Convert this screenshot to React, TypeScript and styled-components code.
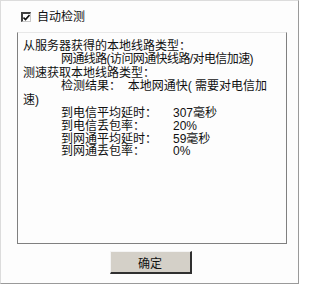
import React from "react";
import styled, { createGlobalStyle } from "styled-components";

const GlobalStyle = createGlobalStyle`
	html, body {
		margin: 0;
		padding: 0;
		background: #ffffff;
	}
`;

const Window = styled.div`
	width: 299px;
	height: 284px;
	box-sizing: border-box;
	border-top: 1px solid #dcdcdc;
	border-left: 1px solid #dcdcdc;
	border-right: 1px solid #9a9a9a;
	border-bottom: 1px solid #9a9a9a;
	background: #fdfdfd;
	display: flex;
	flex-direction: column;
	font-family: "Liberation Sans", "Noto Sans CJK SC", sans-serif;
	font-size: 12px;
	color: #111;
`;

const CheckRow = styled.label`
	display: flex;
	align-items: center;
	gap: 6px;
	margin: 11px 0 0 20px;
	height: 10px;
	line-height: 10px;
`;

const Box = styled.span`
	width: 10px;
	height: 10px;
	box-sizing: border-box;
	border-top: 2px solid #404040;
	border-left: 2px solid #404040;
	border-right: 1px solid #c8c8c8;
	border-bottom: 1px solid #c8c8c8;
	background: #fff;
	display: flex;
	align-items: center;
	justify-content: center;
`;

const Panel = styled.div`
	margin: 10px 0 0 16px;
	width: 270px;
	height: 212px;
	box-sizing: border-box;
	border: 1px solid #808080;
	border-top-color: #e8e8e8;
	padding: 7px 0 0 5px;
	line-height: 13.4px;
`;

const Line = styled.div<{ $indent?: boolean; $tight?: boolean }>`
	padding-left: ${(p) => (p.$indent ? "38px" : "0")};
	letter-spacing: ${(p) => (p.$tight ? "-0.6px" : "normal")};
	white-space: pre;
`;

const Stats = styled.div`
	padding-left: 38px;
`;

const StatRow = styled.div`
	display: grid;
	grid-template-columns: 112px auto;
	height: 12.8px;
`;

const Footer = styled.div`
	display: flex;
	justify-content: center;
	padding: 7px 0 0 2px;
`;

const Button = styled.button`
	width: 82px;
	height: 23px;
	box-sizing: border-box;
	background: #d4d0c8;
	border-top: 1px solid #f4f4f4;
	border-left: 1px solid #f4f4f4;
	border-right: 2px solid #303030;
	border-bottom: 2px solid #303030;
	font-family: "Liberation Sans", "Noto Sans CJK SC", sans-serif;
	font-size: 12px;
	color: #111;
	padding: 0;
`;

const stats = [
	["到电信平均延时：", "307毫秒"],
	["到电信丢包率：", "20%"],
	["到网通平均延时：", "59毫秒"],
	["到网通丢包率：", "0%"],
];

const App = () => {
	return (
		<>
			<GlobalStyle />
			<Window>
				<CheckRow>
					<Box>
						<svg width="7" height="7" viewBox="0 0 7 7">
							<path d="M0.5 3.5 L2.5 5.5 L6.5 1" stroke="#111" strokeWidth="1.6" fill="none" />
						</svg>
					</Box>
					自动检测
				</CheckRow>
				<Panel>
					<Line>从服务器获得的本地线路类型：</Line>
					<Line $indent $tight>网通线路(访问网通快线路/对电信加速)</Line>
					<Line>测速获取本地线路类型：</Line>
					<Line $indent>检测结果：  本地网通快( 需要对电信加</Line>
					<Line>速)</Line>
					<Stats>
						{stats.map(([label, value]) => (
							<StatRow key={label}>
								<span>{label}</span>
								<span>{value}</span>
							</StatRow>
						))}
					</Stats>
				</Panel>
				<Footer>
					<Button>确定</Button>
				</Footer>
			</Window>
		</>
	);
};

export default App;
